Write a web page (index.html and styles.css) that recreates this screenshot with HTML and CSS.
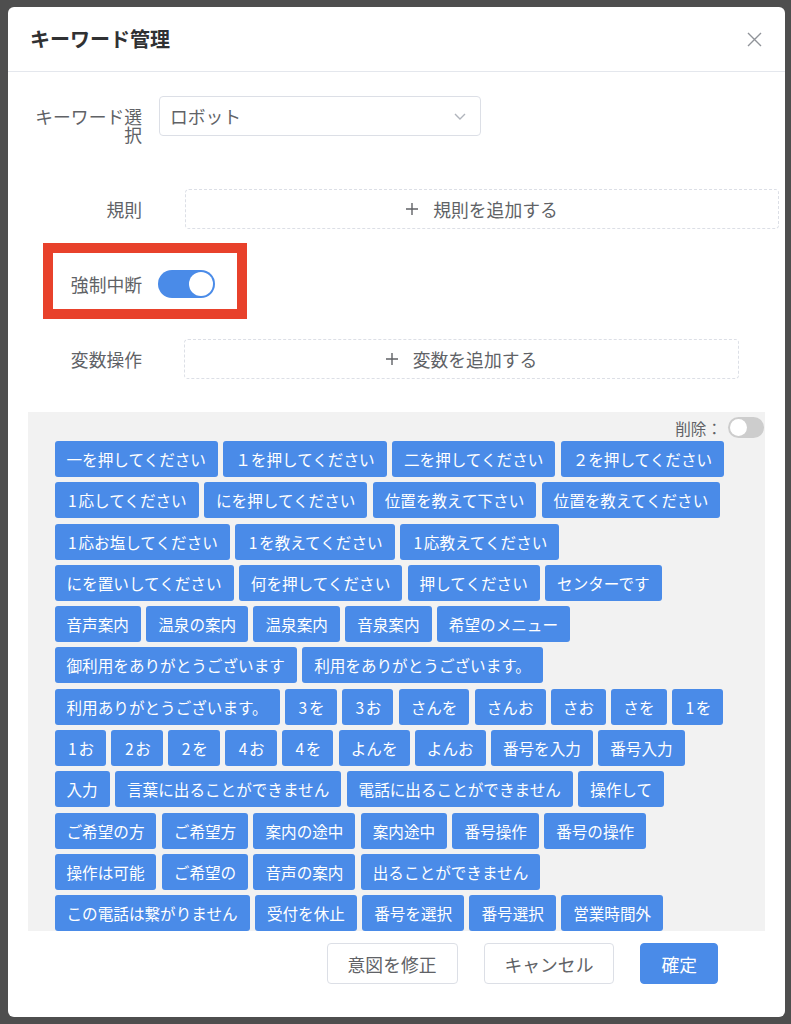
FILE: index.html
```html
<!DOCTYPE html>
<html lang="ja">
<head>
<meta charset="utf-8">
<title>キーワード管理</title>
<link rel="stylesheet" href="styles.css">
</head>
<body>
<div class="modal">
  <div class="modal-header">
    <div class="modal-title">キーワード管理</div>
    <svg class="close" width="15" height="15" viewBox="0 0 15 15"><path d="M1 1L14 14M14 1L1 14" stroke="#909399" stroke-width="1.4" fill="none"/></svg>
  </div>
  <div class="modal-body">
    <div class="form-row row-select">
      <div class="label label-wrap">キーワード選択</div>
      <div class="select">
        <span>ロボット</span>
        <svg width="12" height="7" viewBox="0 0 12 7"><path d="M1 1L6 6L11 1" stroke="#b0b4bc" stroke-width="1.4" fill="none"/></svg>
      </div>
    </div>
    <div class="form-row row-rule">
      <div class="label">規則</div>
      <div class="dashed dashed-rule">
        <svg width="12" height="12" viewBox="0 0 12 12"><path d="M6 0V12M0 6H12" stroke="#606266" stroke-width="1.4"/></svg>
        <span>規則を追加する</span>
      </div>
    </div>
    <div class="form-row row-switch">
      <div class="label">強制中断</div>
      <div class="switch on"><span class="knob"></span></div>
      <div class="highlight"></div>
    </div>
    <div class="form-row row-var">
      <div class="label">変数操作</div>
      <div class="dashed dashed-var">
        <svg width="12" height="12" viewBox="0 0 12 12"><path d="M6 0V12M0 6H12" stroke="#606266" stroke-width="1.4"/></svg>
        <span>変数を追加する</span>
      </div>
    </div>
    <div class="tag-panel">
      <div class="delete-row">
        <span>削除：</span>
        <div class="switch-sm"><span class="knob-sm"></span></div>
      </div>
      <div class="tags">
        <span class="tag">一を押してください</span>
        <span class="tag">１を押してください</span>
        <span class="tag">二を押してください</span>
        <span class="tag">２を押してください</span>
        <span class="tag"><span class="num">1</span>応してください</span>
        <span class="tag">にを押してください</span>
        <span class="tag">位置を教えて下さい</span>
        <span class="tag">位置を教えてください</span>
        <span class="tag"><span class="num">1</span>応お塩してください</span>
        <span class="tag"><span class="num">1</span>を教えてください</span>
        <span class="tag"><span class="num">1</span>応教えてください</span>
        <span class="tag">にを置いしてください</span>
        <span class="tag">何を押してください</span>
        <span class="tag">押してください</span>
        <span class="tag">センターです</span>
        <span class="tag">音声案内</span>
        <span class="tag">温泉の案内</span>
        <span class="tag">温泉案内</span>
        <span class="tag">音泉案内</span>
        <span class="tag">希望のメニュー</span>
        <span class="tag">御利用をありがとうございます</span>
        <span class="tag">利用をありがとうございます。</span>
        <span class="tag">利用ありがとうございます。</span>
        <span class="tag"><span class="num">3</span>を</span>
        <span class="tag"><span class="num">3</span>お</span>
        <span class="tag">さんを</span>
        <span class="tag">さんお</span>
        <span class="tag">さお</span>
        <span class="tag">さを</span>
        <span class="tag"><span class="num">1</span>を</span>
        <span class="tag"><span class="num">1</span>お</span>
        <span class="tag"><span class="num">2</span>お</span>
        <span class="tag"><span class="num">2</span>を</span>
        <span class="tag"><span class="num">4</span>お</span>
        <span class="tag"><span class="num">4</span>を</span>
        <span class="tag">よんを</span>
        <span class="tag">よんお</span>
        <span class="tag">番号を入力</span>
        <span class="tag">番号入力</span>
        <span class="tag">入力</span>
        <span class="tag">言葉に出ることができません</span>
        <span class="tag">電話に出ることができません</span>
        <span class="tag">操作して</span>
        <span class="tag">ご希望の方</span>
        <span class="tag">ご希望方</span>
        <span class="tag">案内の途中</span>
        <span class="tag">案内途中</span>
        <span class="tag">番号操作</span>
        <span class="tag">番号の操作</span>
        <span class="tag">操作は可能</span>
        <span class="tag">ご希望の</span>
        <span class="tag">音声の案内</span>
        <span class="tag">出ることができません</span>
        <span class="tag">この電話は繋がりません</span>
        <span class="tag">受付を休止</span>
        <span class="tag">番号を選択</span>
        <span class="tag">番号選択</span>
        <span class="tag">営業時間外</span>
      </div>
    </div>
    <div class="footer">
      <button class="btn">意図を修正</button>
      <button class="btn">キャンセル</button>
      <button class="btn btn-primary">確定</button>
    </div>
  </div>
</div>
</body>
</html>
```

FILE: styles.css
```css
* { box-sizing: border-box; }
html, body { margin: 0; height: 1024px; overflow: hidden; }
body {
  background: #4e4e4e;
  padding: 7px 6px 0 8px;
  font-family: "Noto Sans CJK JP", "Noto Sans", sans-serif;
  color: #606266;
}
.modal {
  width: 777px;
  height: 1010px;
  background: #fff;
  border-radius: 6px;
  overflow: hidden;
}
.modal-header {
  height: 65px;
  border-bottom: 1px solid #e4e7ed;
  display: flex;
  align-items: center;
  justify-content: space-between;
  padding: 0 23px 0 22px;
}
.modal-title {
  font-size: 20px;
  font-weight: 700;
  color: #303133;
  line-height: 24px;
}
.close { display: block; }
.modal-body { padding-top: 24px; }
.form-row {
  display: flex;
  align-items: center;
  position: relative;
  padding-left: 20px;
}
.label {
  width: 131px;
  flex: none;
  padding-right: 17px;
  text-align: right;
  font-size: 17.8px;
  line-height: 40px;
  color: #606266;
}
.row-select { align-items: flex-start; }
.label-wrap { line-height: 18px; padding-top: 11px; }
.select {
  width: 322px;
  height: 40px;
  border: 1px solid #dcdfe6;
  border-radius: 4px;
  display: flex;
  align-items: center;
  justify-content: space-between;
  padding: 0 14px 0 10px;
  font-size: 17.8px;
  color: #606266;
}
.select svg { display: block; }
.row-rule { margin-top: 46px; height: 40px; }
.row-switch { margin-top: 35px; height: 40px; }
.row-var { margin-top: 35px; height: 40px; }
.dashed {
  height: 40px;
  border: 1px dashed #dcdfe6;
  border-radius: 4px;
  display: flex;
  align-items: center;
  justify-content: center;
  gap: 15px;
  font-size: 17.8px;
  color: #606266;
}
.dashed svg { display: block; }
.dashed-rule { margin-left: 26px; width: 594px; }
.dashed-var { margin-left: 25px; width: 555px; }
.switch {
  width: 57px;
  height: 28px;
  border-radius: 14px;
  background: #4a8be8;
  position: relative;
  margin-left: -1px;
}
.knob {
  position: absolute;
  top: 2px;
  right: 2px;
  width: 24px;
  height: 24px;
  border-radius: 50%;
  background: #fff;
}
.highlight {
  position: absolute;
  left: 35px;
  top: -21px;
  width: 204px;
  height: 76px;
  border: 10px solid #e8412b;
}
.tag-panel {
  margin: 33px 20px 0 20px;
  height: 519px;
  background: #f2f2f2;
  overflow: hidden;
  padding-top: 5px;
}
.delete-row {
  display: flex;
  justify-content: flex-end;
  align-items: center;
  height: 21px;
  padding-right: 1px;
  font-size: 15.6px;
  color: #606266;
  gap: 6px;
}
.switch-sm {
  width: 36px;
  height: 21px;
  border-radius: 11px;
  background: #cdcdcd;
  position: relative;
}
.knob-sm {
  position: absolute;
  left: 2px;
  top: 2px;
  width: 17px;
  height: 17px;
  border-radius: 50%;
  background: #fff;
}
.tags {
  margin: 3px 29px 0 26.5px;
  display: flex;
  flex-wrap: wrap;
  gap: 5.3px 5.3px;
}
.tag {
  height: 36px;
  line-height: 36px;
  padding: 0 12px;
  background: #4a8be8;
  color: #fff;
  font-size: 15.6px;
  border-radius: 3px;
  white-space: nowrap;
}
.num { margin: 0 1.7px 0 1.6px; }
.footer {
  margin-top: 12px;
  display: flex;
  justify-content: flex-end;
  gap: 26px;
  padding-right: 67px;
}
.btn {
  height: 41px;
  padding: 0 20px;
  border: 1px solid #dcdfe6;
  border-radius: 4px;
  background: #fff;
  color: #606266;
  font-family: "Noto Sans CJK JP", "Noto Sans", sans-serif;
  font-size: 17.8px;
}
.btn-primary {
  background: #4a8be8;
  border-color: #4a8be8;
  color: #fff;
}
```
